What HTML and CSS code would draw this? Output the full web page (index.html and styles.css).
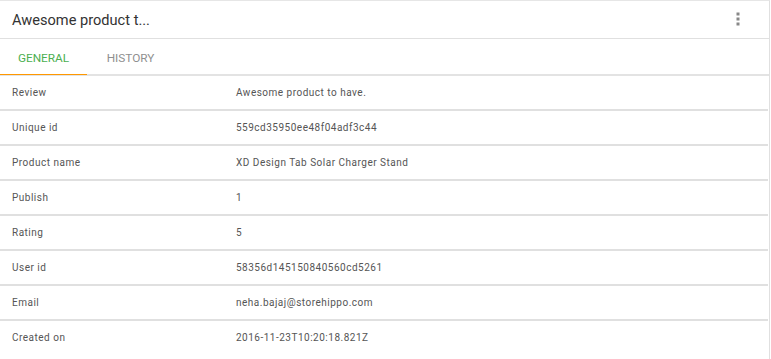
FILE: index.html
```html
<!DOCTYPE html>
<html>
<head>
<meta charset="utf-8">
<link rel="stylesheet" href="styles.css">
</head>
<body>
<div class="card">
  <div class="header">
    <div class="title">Awesome product t...</div>
    <div class="menu">
      <svg width="4" height="14" viewBox="0 0 4 14"><rect x="0.5" y="0.5" width="3" height="3" fill="#888"/><rect x="0.5" y="5.5" width="3" height="3" fill="#888"/><rect x="0.5" y="10.5" width="3" height="3" fill="#888"/></svg>
    </div>
  </div>
  <div class="tabs">
    <div class="tab active">GENERAL</div>
    <div class="tab">HISTORY</div>
  </div>
  <div class="rows">
    <div class="row"><div class="label">Review</div><div class="value">Awesome product to have.</div></div>
    <div class="row"><div class="label">Unique id</div><div class="value">559cd35950ee48f04adf3c44</div></div>
    <div class="row"><div class="label">Product name</div><div class="value">XD Design Tab Solar Charger Stand</div></div>
    <div class="row"><div class="label">Publish</div><div class="value">1</div></div>
    <div class="row"><div class="label">Rating</div><div class="value">5</div></div>
    <div class="row"><div class="label">User id</div><div class="value">58356d145150840560cd5261</div></div>
    <div class="row"><div class="label">Email</div><div class="value">neha.bajaj@storehippo.com</div></div>
    <div class="row last"><div class="label">Created on</div><div class="value">2016-11-23T10:20:18.821Z</div></div>
  </div>
</div>
</body>
</html>
```
FILE: styles.css
```css
html, body {
  margin: 0;
  padding: 0;
  background: #fff;
}
body {
  font-family: Roboto, "Liberation Sans", Arial, sans-serif;
  color: #333;
}
.card {
  width: 770px;
  height: 359px;
  border-top: 1px solid #e6e6e6;
  border-right: 1px solid #e0e0e0;
  box-sizing: border-box;
  overflow: hidden;
}
.header {
  height: 37px;
  display: flex;
  align-items: center;
  justify-content: space-between;
  padding: 0 29px 0 12px;
  border-bottom: 1px solid #e0e0e0;
}
.title {
  font-size: 14.6px;
  color: #333;
  padding-top: 1px;
}
.menu {
  display: flex;
  align-items: center;
  height: 14px;
  margin-top: -1px;
}
.tabs {
  display: flex;
  height: 35px;
  border-bottom: 2px solid #e3e3e3;
}
.tab {
  width: 87px;
  display: flex;
  align-items: center;
  justify-content: center;
  font-size: 11.8px;
  color: #8f8f8f;
  box-sizing: border-box;
  padding-top: 2px;
}
.tab.active {
  color: #4caf50;
  border-bottom: 1px solid #ff9800;
  margin-bottom: -1px;
}
.rows {
  padding-right: 1px;
}
.row {
  display: flex;
  height: 33px;
  align-items: center;
  border-bottom: 2px solid #e0e0e0;
  font-size: 10px;
  letter-spacing: 0.5px;
  color: #555;
}
.row.last {
  border-bottom: none;
}
.label {
  width: 224px;
  padding-left: 12px;
}
.value {
  flex: 1;
}
```
